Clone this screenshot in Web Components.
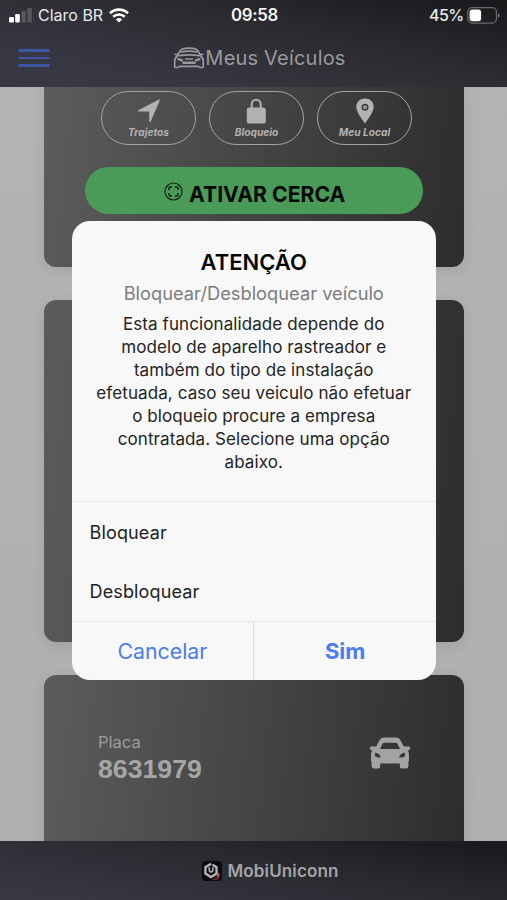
<!DOCTYPE html>
<html lang="pt-BR">
<head>
<meta charset="utf-8">
<title>Meus Veículos</title>
<style>
html,body{margin:0;height:100%;overflow:hidden}
body{font-family:Inter,"Liberation Sans",sans-serif;background:#b2b2b2}
</style>
</head>
<body>
<vehicle-app></vehicle-app>
<script>
function define(name, html) {
  const tpl = document.createElement('template');
  tpl.innerHTML = html;
  customElements.define(name, class extends HTMLElement {
    constructor() {
      super();
      this.attachShadow({mode: 'open'}).append(tpl.content.cloneNode(true));
    }
  });
}

define('status-bar', `
<style>
:host{display:grid;grid-template-columns:1fr auto 1fr;align-items:center;height:29px;color:#e8e8ea;font-size:16px;line-height:29px;padding:0 7px 0 9px}
.l,.r{display:flex;align-items:center}
.r{justify-content:flex-end;gap:3px;font-weight:500;font-size:16px;letter-spacing:-.6px}
.l span{margin:0 6px 0 6px}
.r span{margin-right:.5px}
b{font-weight:600;font-size:16.800px;letter-spacing:-.25px;color:#f4f4f4}
svg{display:block}
</style>
<div class="l">
<svg width="23" height="15" viewBox="0 0 23 15"><g fill="#fff"><rect x="0" y="9" width="5" height="5.5" rx="1.2"/><rect x="6.2" y="6" width="4.6" height="8.5" rx="1.2"/></g><g fill="#57575d"><rect x="12.4" y="3" width="4.4" height="11.5" rx="1.2"/><rect x="18.4" y="0" width="4.4" height="14.5" rx="1.2"/></g></svg>
<span>Claro BR</span>
<svg width="20" height="15" viewBox="0 0 20 15" fill="none" stroke="#fff" stroke-width="2.7"><path d="M1 5.3a13 13 0 0 1 18 0"/><path d="M4.2 8.8a8.4 8.4 0 0 1 11.6 0"/><path d="M10 14.6 6.9 11.5a4.6 4.6 0 0 1 6.2 0Z" fill="#fff" stroke="none"/></svg>
</div>
<b>09:58</b>
<div class="r"><span>45%</span>
<svg width="33" height="17" viewBox="0 0 33 17"><rect x=".7" y=".7" width="28.8" height="15.4" rx="4.3" fill="none" stroke="#68686c" stroke-width="1.3"/><rect x="2.6" y="2.6" width="11.5" height="11.6" rx="2.6" fill="#fff"/><path d="M31 6v5q1.6-.7 1.6-2.5T31 6" fill="#707074"/></svg></div>
`);

define('menu-button', `
<style>
:host{display:flex;flex-direction:column;gap:5.1px;width:31.5px}
i{display:block;height:2.7px;border-radius:1.4px;background:#3d55a4}
</style><i></i><i></i><i></i>`);

define('app-toolbar', `
<style>
:host{display:grid;grid-template-columns:1fr auto 1fr;align-items:center;height:57px;width:513px;padding:0 12px 0 18px;box-sizing:border-box;color:#9a9a9e}
.t{display:flex;align-items:center;font-size:20px;letter-spacing:.2px;line-height:28px;white-space:nowrap}
svg{display:block}
</style>
<menu-button></menu-button>
<div class="t">
<svg width="32" height="24" viewBox="0 0 32 24" fill="none" stroke="#9a9a9e" stroke-width="1.700" stroke-linejoin="round" stroke-linecap="round">
<path d="M4.300 10 7 4.900Q8.300 3 10.500 2.600Q16 1.700 21.500 2.600Q23.700 3 25 4.900L27.700 10Q30.300 12 30.300 15.500V20.400Q30.300 21.500 29.200 21.500H27Q26 21.500 25.700 20.400H6.300Q6 21.500 5 21.500H2.800Q1.700 21.500 1.700 20.400V15.500Q1.700 12 4.300 10Z"/>
<path d="M2.300 8.300H4.500M27.500 8.300H29.700M6 9.700Q16 8 26 9.700M8.500 5.800Q16 4.500 23.500 5.800" />
<path d="M12.500 13H19.500" stroke-width="1.300"/><path d="M10.500 16.800H21.500" stroke-width="2.600"/><path d="M5.500 13.200 9 14.300M26.500 13.200 23 14.300" stroke-width="2.300"/></svg>
<span>Meus Veículos</span></div><span></span>`);

define('app-header', `
<style>:host{display:block;height:86.500px;flex:none;padding-top:.5px;box-sizing:border-box;background:linear-gradient(192deg,#19191c 0%,#2a2a2f 38%,#373741 78%,#383842 100%)}</style>
<status-bar></status-bar><app-toolbar></app-toolbar>`);

define('pill-action', `
<style>
:host{display:flex;flex-direction:column;align-items:center;box-sizing:border-box;width:95.500px;height:54px;border:1.400px solid #a3a3a3;border-radius:27px;color:#b2b2b2;font:italic 700 10.200px/14px Inter,sans-serif;padding-top:5.500px}
.i{height:27px;display:flex;align-items:center}
</style><div class="i"><slot name="icon"></slot></div><slot></slot>`);

define('fence-button', `
<style>
:host{display:flex;align-items:center;justify-content:center;gap:6px;height:47px;border-radius:24px;background:#4a9a58;color:#050805;font-weight:700;font-size:21.200px;line-height:30px;padding-left:2px;box-sizing:border-box}
svg{margin-top:2px}span{margin-top:7.500px}
</style>
<svg width="19" height="19" viewBox="0 0 19 19" fill="none" stroke="#101c12"><circle cx="9.500" cy="9.500" r="8.500" stroke-width="1.200"/><path d="M5 8V6.500Q5 5 6.500 5H8M11 5h1.500Q14 5 14 6.500V8M14 11v1.500Q14 14 12.500 14H11M8 14H6.500Q5 14 5 12.500V11" stroke-width="1.500"/></svg>
<span>ATIVAR CERCA</span>`);

define('vehicle-card', `
<style>:host{display:block;box-sizing:border-box;flex:none;border-radius:12px;background:linear-gradient(96deg,#5c5c5c 0%,#2d2d2d 100%);box-shadow:0 3px 14px rgba(0,0,0,.09)}</style>
<slot></slot>`);

define('plate-row', `
<style>
:host{display:flex;justify-content:space-between;padding:56.300px 53px 0 54px;color:#9c9c9c}
.p{font-size:16.500px;line-height:22px}
.n{font:700 26.700px/32px "Liberation Sans",Arial,sans-serif;color:#a6a6a6}
svg{margin-top:6px;display:block}
</style>
<div><div class="p">Placa</div><div class="n">8631979</div></div>
<svg width="42" height="32" viewBox="0 0 42 32" fill="#a3a3a3" fill-rule="evenodd"><path d="M7.200 9.500 10.300 3.700Q12 .6 15 .6H27Q30 .6 31.700 3.700L34.800 9.500H39.800Q41 9.500 41 10.600V12Q41 13 39.800 13H38.700Q40 15 40 17.500V22Q40 24.500 39.400 25V29Q39.400 31.500 37 31.500H32.800Q30.800 31.500 30.800 29.300V26.500H11.200V29.300Q11.200 31.500 9.200 31.500H5Q2.600 31.500 2.600 29V25Q2 24.500 2 22V17.500Q2 15 3.300 13H2.200Q1 13 1 12V10.600Q1 9.500 2.200 9.500ZM11 12H31L28.600 7Q28 5.700 26.600 5.700H15.400Q14 5.700 13.400 7ZM6 16.500V18.500Q6.500 20.500 9 20.600H11.800Q11.300 16.800 6 15.600ZM36 16.500V18.500Q35.500 20.500 33 20.600H30.200Q30.700 16.800 36 15.600Z"/></svg>`);

define('vehicle-list', `
<style>
:host{display:flex;flex-direction:column;gap:33px;flex:1;min-height:0;overflow:hidden;padding:0 43.500px 0 44px;background:linear-gradient(#b3b3b3,#afafaf)}
.a{height:180.800px;border-radius:0 0 12px 12px;padding:4.500px 40.500px 0}
.b{height:341.700px}.c{height:190px}
.row{display:flex;justify-content:space-between;padding:0 10.700px 0 16.300px;margin-bottom:21.500px}
svg{display:block}
</style>
<vehicle-card class="a">
<div class="row">
<pill-action><svg slot="icon" width="24" height="24" viewBox="0 0 24 24" fill="#b2b2b2"><path d="M23 .8 13.500 23Q12.900 24 12.300 22.800V12.500H1.500Q.2 12 1.300 11.200L22 .5Q23 .3 23 .8Z"/></svg>Trajetos</pill-action>
<pill-action><svg slot="icon" width="21" height="26" viewBox="0 0 21 26"><path d="M5.700 10V6.200a4.500 4.500 0 0 1 9 0V10" fill="none" stroke="#b2b2b2" stroke-width="2"/><rect x=".8" y="9.500" width="19" height="16" rx="2.600" fill="#b2b2b2"/></svg>Bloqueio</pill-action>
<pill-action><svg slot="icon" width="18" height="26" viewBox="0 0 18 26"><path d="M9 .6C4.200.6.300 4 .300 8.800.300 14 5.500 20.500 8.200 24.400q.8 1 1.600 0C12.500 20.500 17.700 14 17.700 8.800 17.700 4 13.800.6 9 .6Z" fill="#b2b2b2"/><circle cx="9" cy="9.300" r="2.800" fill="#999" stroke="#3c3c3c" stroke-width="1.500"/></svg>Meu Local</pill-action>
</div>
<fence-button></fence-button>
</vehicle-card>
<vehicle-card class="b"></vehicle-card>
<vehicle-card class="c"><plate-row></plate-row></vehicle-card>`);

define('app-footer', `
<style>
:host{display:flex;align-items:center;justify-content:center;gap:6px;height:59px;flex:none;padding-left:33px;box-sizing:border-box;background:linear-gradient(190deg,#19191c 0%,#28282e 40%,#363640 85%,#383842 100%);color:#a4a4a8;font-weight:600;font-size:17px;letter-spacing:.13px;line-height:24px}
svg{display:block}
</style>
<svg width="20" height="20" viewBox="0 0 20 20"><rect width="20" height="20" rx="3" fill="#0c0c0e"/><path d="M9.200 2.800 3.400 6.200V12.600L9 16L14.500 12.600V6.200L10.500 3.800" fill="none" stroke="#b6b6ba" stroke-width="2.400"/><path d="M7.300 6.300V9.500Q7.300 11 9 11T10.900 9.500V6.300" fill="none" stroke="#b6b6ba" stroke-width="1.600"/><path d="M16.800 12.300 15.700 16.300" fill="none" stroke="#c8605a" stroke-width="2"/><path d="M11 18.300Q14 18.500 16.600 17" fill="none" stroke="#8c2f2c" stroke-width="1.600"/></svg>
<span>MobiUniconn</span>`);

define('radio-option', `
<style>:host{display:flex;align-items:center;flex:1;padding:.5px 0 0 18px;font-size:18px;letter-spacing:.15px;color:#222}</style><slot></slot>`);

define('alert-dialog', `
<style>
:host{position:absolute;left:71.500px;top:221.300px;width:364.500px;height:459px;border-radius:18px;background:#f8f8f8;display:flex;flex-direction:column;overflow:hidden;text-align:center;color:#242424}
.h{height:281px;padding:25.500px 20px 0;box-sizing:border-box;border-bottom:1px solid #e6e6e7}
h2{font-size:22px;font-weight:600;line-height:30px;margin:0;color:#080808}
h3{font-size:18.300px;font-weight:400;line-height:32px;margin:0;color:#7d7d7d}
p{font-size:17px;letter-spacing:.09px;line-height:22.900px;margin:4.700px 0 0;white-space:nowrap}
.o{display:flex;flex-direction:column;height:120px;box-sizing:border-box;border-bottom:1px solid #e6e6e7}
.f{display:flex;flex:1;color:#4a7df0;font-size:21.300px}
.f>*{flex:1;display:flex;align-items:center;justify-content:center}
.f span{border-right:1px solid #dededf}
.f b{font-weight:700;font-size:22px}
</style>
<div class="h"><h2>ATENÇÃO</h2><h3>Bloquear/Desbloquear veículo</h3>
<p>Esta funcionalidade depende do<br>modelo de aparelho rastreador e<br>também do tipo de instalação<br>efetuada, caso seu veiculo não efetuar<br>o bloqueio procure a empresa<br>contratada. Selecione uma opção<br>abaixo.</p></div>
<div class="o"><radio-option>Bloquear</radio-option><radio-option>Desbloquear</radio-option></div>
<div class="f"><span>Cancelar</span><b>Sim</b></div>`);

define('vehicle-app', `
<style>:host{display:flex;flex-direction:column;height:900px;width:507px;position:relative;overflow:hidden}</style>
<app-header></app-header><vehicle-list></vehicle-list><app-footer></app-footer><alert-dialog></alert-dialog>`);
</script>
</body>
</html>
